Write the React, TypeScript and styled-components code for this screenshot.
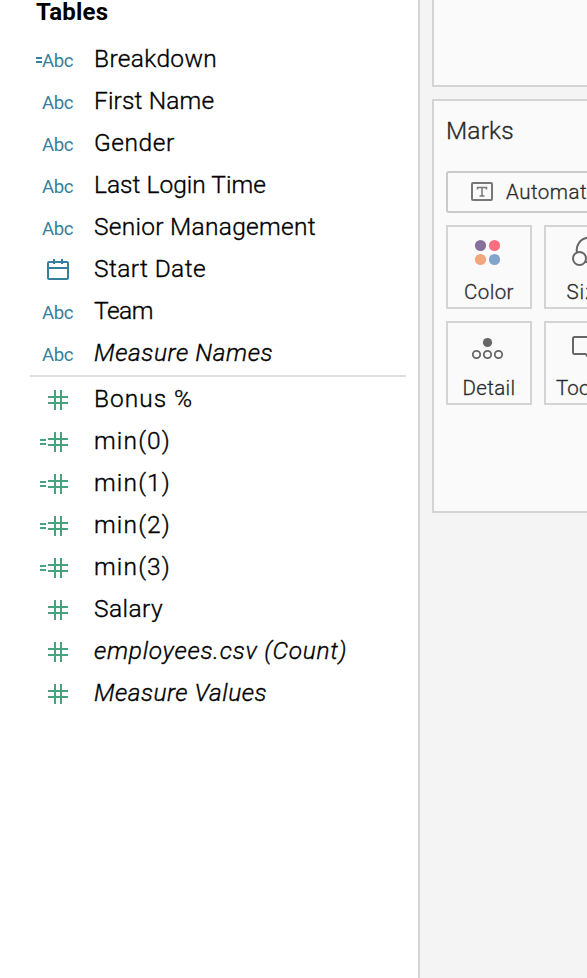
import React from "react";
import styled, { createGlobalStyle } from "styled-components";

const Global = createGlobalStyle`
  * { box-sizing: border-box; }
  body { margin: 0; background: #fff; overflow: hidden; font-family: Roboto, "Liberation Sans", sans-serif; }
`;

const Workspace = styled.div`
  display: flex;
  width: 587px;
  height: 978px;
  overflow: hidden;
`;

const DataPane = styled.aside`
  flex: 0 0 420px;
  border-right: 2px solid #d4d4d4;
  background: #fff;
  color: #000;
`;

const PaneTitle = styled.h2`
  margin: 0;
  height: 38px;
  padding-left: 36px;
  font-size: 24px;
  line-height: 24px;
  font-weight: 700;
  letter-spacing: 0.2px;
`;

const FieldList = styled.ul`
  list-style: none;
  margin: 0;
  padding: 0;
`;

const FieldRow = styled.li`
  display: flex;
  height: 42px;
  align-items: stretch;
`;

const IconSlot = styled.span`
  flex: 0 0 94px;
  height: 42px;
  svg { display: block; }
`;

const AbcText = styled.text`
  font-size: 18.6px;
  fill: #377f9f;
`;

const FieldName = styled.span<{ $italic?: boolean; $tracking?: number }>`
  font-size: 24.5px;
  font-weight: 300;
  -webkit-text-stroke: 0.35px currentColor;
  line-height: 42px;
  white-space: nowrap;
  font-style: ${(p) => (p.$italic ? "italic" : "normal")};
  letter-spacing: ${(p) => p.$tracking ?? 0}px;
`;

const Divider = styled.hr`
  margin: 1px 12px 1px 30px;
  height: 2px;
  border: 0;
  background: #dfdfdf;
`;

const Shelves = styled.main`
  flex: 1;
  min-width: 0;
  padding-left: 12px;
  background: #f4f4f4;
  color: #2b2b2b;
`;

const Card = styled.section<{ $height: number; $open?: boolean }>`
  width: 300px;
  height: ${(p) => p.$height}px;
  margin-bottom: 12px;
  padding: 0 12px;
  border: 2px solid #d4d4d4;
  ${(p) => p.$open && "border-top: 0;"}
  background: #fafafa;
`;

const CardTitle = styled.h3`
  margin: 0;
  height: 70px;
  line-height: 60px;
  font-size: 24.5px;
  font-weight: 300;
  letter-spacing: 0.15px;
  -webkit-text-stroke: 0.35px currentColor;
`;

const MarkSelect = styled.div`
  display: flex;
  align-items: center;
  height: 42px;
  padding-left: 23px;
  gap: 13px;
  border: 2px solid #cacaca;
  border-radius: 3px;
  font-size: 20.5px;
  font-weight: 300;
  letter-spacing: 0.5px;
  -webkit-text-stroke: 0.3px currentColor;
  svg { position: static; margin-top: -1px; }
`;

const MarkGrid = styled.div`
  display: grid;
  grid-template-columns: repeat(3, 86px);
  grid-auto-rows: 84px;
  gap: 12px;
  margin-top: 12px;
`;

const MarkButton = styled.div`
  display: flex;
  flex-direction: column;
  align-items: center;
  border: 2px solid #d4d4d4;
  svg { display: block; flex: 0 0 52px; }
`;

const MarkLabel = styled.span<{ $tracking?: number }>`
  font-size: 20.5px;
  font-weight: 300;
  line-height: 26px;
  letter-spacing: ${(p) => p.$tracking ?? 0.4}px;
  -webkit-text-stroke: 0.3px currentColor;
`;

type Kind = "abc" | "date" | "number";

function FieldIcon({ kind, calc }: { kind: Kind; calc?: boolean }) {
  return (
    <IconSlot>
      <svg width="94" height="42" fill="none">
        {kind === "abc" && (
          <>
            {calc && <path d="M36 20h6M36 24h6" stroke="#377f9f" strokeWidth="1.8" />}
            <AbcText x="42" y="29" textLength="31.5">Abc</AbcText>
          </>
        )}
        {kind === "date" && (
          <g stroke="#377f9f" strokeWidth="2">
            <rect x="48" y="14" width="20" height="17" rx="1" />
            <path d="M48 20h20M54 11v5M62 11v5" />
          </g>
        )}
        {kind === "number" && (
          <g stroke="#45a47d" strokeWidth="2">
            {calc && <path d="M40 20h6M40 24h6" strokeWidth="2" />}
            <path d="M48 19h20M48 25h20M55 12v20M61 12v20" />
          </g>
        )}
      </svg>
    </IconSlot>
  );
}

type Field = { name: string; kind: Kind; calc?: boolean; italic?: boolean; tracking?: number };

const dimensions: Field[] = [
  { name: "Breakdown", kind: "abc", calc: true, tracking: 0.35 },
  { name: "First Name", kind: "abc", tracking: 0.15 },
  { name: "Gender", kind: "abc", tracking: 0.55 },
  { name: "Last Login Time", kind: "abc", tracking: 0.03 },
  { name: "Senior Management", kind: "abc", tracking: 0.28 },
  { name: "Start Date", kind: "date", tracking: 0.4 },
  { name: "Team", kind: "abc", tracking: -0.5 },
  { name: "Measure Names", kind: "abc", italic: true, tracking: 0.57 },
];

const measures: Field[] = [
  { name: "Bonus %", kind: "number", tracking: 1 },
  { name: "min(0)", kind: "number", calc: true, tracking: 1.15 },
  { name: "min(1)", kind: "number", calc: true, tracking: 1.15 },
  { name: "min(2)", kind: "number", calc: true, tracking: 1.15 },
  { name: "min(3)", kind: "number", calc: true, tracking: 1.15 },
  { name: "Salary", kind: "number", tracking: 0.45 },
  { name: "employees.csv (Count)", kind: "number", italic: true, tracking: 0.72 },
  { name: "Measure Values", kind: "number", italic: true, tracking: 0.48 },
];

function Fields({ items }: { items: Field[] }) {
  return (
    <FieldList>
      {items.map((f) => (
        <FieldRow key={f.name}>
          <FieldIcon kind={f.kind} calc={f.calc} />
          <FieldName $italic={f.italic} $tracking={f.tracking}>{f.name}</FieldName>
        </FieldRow>
      ))}
    </FieldList>
  );
}

export default function App() {
  return (
    <Workspace>
      <Global />
      <DataPane>
        <PaneTitle>Tables</PaneTitle>
        <Fields items={dimensions} />
        <Divider />
        <Fields items={measures} />
      </DataPane>
      <Shelves>
        <Card $height={87} $open />
        <Card $height={414}>
          <CardTitle>Marks</CardTitle>
          <MarkSelect>
            <svg width="22" height="20" fill="none" stroke="#777">
              <rect x="1" y="1" width="20" height="17" rx="1" strokeWidth="2" />
              <path d="M6.500 7.500V5.500h9V7.500M11 5.500v8.500M8.500 14h5" strokeWidth="1.500" />
            </svg>
            <span>Automatic</span>
          </MarkSelect>
          <MarkGrid>
            <MarkButton>
              <svg width="82" height="52">
                <circle cx="32.5" cy="18.5" r="5.6" fill="#87709a" />
                <circle cx="46.5" cy="18.5" r="5.6" fill="#f96f7f" />
                <circle cx="32.5" cy="32.5" r="5.6" fill="#f3a67c" />
                <circle cx="46.5" cy="32.5" r="5.6" fill="#82a4cc" />
              </svg>
              <MarkLabel>Color</MarkLabel>
            </MarkButton>
            <MarkButton>
              <svg width="82" height="52" fill="none" stroke="#666" strokeWidth="2">
                <circle cx="33.5" cy="31.5" r="6.5" />
                <path d="M31 25.500A11.500 12 0 1 1 42 35H38.500" />
              </svg>
              <MarkLabel $tracking={1}>Size</MarkLabel>
            </MarkButton>
            <MarkButton />
            <MarkButton>
              <svg width="82" height="52" fill="none" stroke="#666" strokeWidth="1.8">
                <circle cx="39.5" cy="19.5" r="4.6" fill="#666" stroke="none" />
                <circle cx="28.5" cy="31.5" r="3.7" />
                <circle cx="39.5" cy="31.5" r="3.7" />
                <circle cx="50.5" cy="31.5" r="3.7" />
              </svg>
              <MarkLabel>Detail</MarkLabel>
            </MarkButton>
            <MarkButton>
              <svg width="82" height="52" fill="none" stroke="#666" strokeWidth="2">
                <path d="M54 14H28.500a1.500 1.500 0 0 0-1.500 1.500V29.500a1.500 1.500 0 0 0 1.500 1.500H39.500l4 4 4-4H54z" />
              </svg>
              <MarkLabel $tracking={0.1}>Tooltip</MarkLabel>
            </MarkButton>
          </MarkGrid>
        </Card>
      </Shelves>
    </Workspace>
  );
}
